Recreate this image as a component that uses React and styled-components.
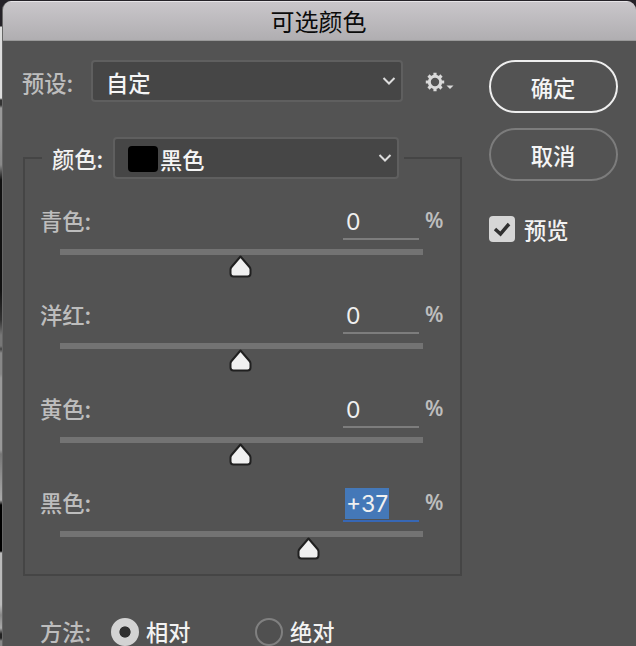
import React, { useState } from 'react';
import styled, { createGlobalStyle } from 'styled-components';

const CHANNELS = [
  { name: '青色', value: 0 },
  { name: '洋红', value: 0 },
  { name: '黄色', value: 0 },
  { name: '黑色', value: 37 },
];

const GlobalStyle = createGlobalStyle`
  * {
    box-sizing: border-box;
  }

  body {
    background: #2a262b;
    font-family: 'Noto Sans CJK SC', sans-serif;
    font-size: 22.3px;
    font-weight: 500;
    line-height: 32px;
    margin: 0;
    overflow: hidden;
  }
`;

const Page = styled.div`
  background: linear-gradient(
    #252228 0 26px, #dedede 27px 98px, #333 100px 105px, #999 108px 125px,
    #888 165px, #111 180px 290px, #333 320px, #777 335px 346px, #444 349px,
    #888 353px 374px, #999 378px 450px, #777 454px, #aaa 500px, #000 505px 551px,
    #bbb 553px 605px, #888 615px, #aaa 628px, #222 634px 638px, #888 641px
  );
  height: 646px;
  padding: 1px 0 0 2px;
  width: 636px;
`;

const Dialog = styled.div`
  background: #535353;
  border-left: 1px solid #666;
  border-radius: 9px 9px 0 0;
  height: 645px;
  overflow: hidden;
`;

const TitleBar = styled.header`
  background: linear-gradient(#c9c6ca, #b0aeb1);
  border-bottom: 1px solid #999;
  border-top: 1px solid #e6e4e7;
  color: #0b0b0b;
  font-size: 24px;
  font-weight: 400;
  height: 40px;
  line-height: 37px;
  padding-right: 2px;
  text-align: center;
`;

const Content = styled.main`
  display: flex;
  gap: 27px;
  padding: 19px 18px 0 20px;
`;

const Settings = styled.section`
  width: 439px;
`;

const PresetRow = styled.div`
  align-items: center;
  display: flex;
`;

const Label = styled.span`
  color: ${props => (props.$bright ? '#f2f2f2' : '#bdbdbd')};
  flex: none;
  width: ${props => props.$width}px;
`;

const PresetLabel = styled(Label)`
  margin-left: -1px;
  padding-top: 1px;
`;

const SelectBox = styled.button`
  align-items: center;
  background: #464646;
  border: 2px solid #5f5f5f;
  border-radius: 4px;
  color: #f5f5f5;
  display: flex;
  font: inherit;
  height: 42px;
  padding: 1px 5px 0 13px;
  width: ${props => props.$width}px;

  > svg {
    margin: 1px 0 0 auto;
  }
`;

const Swatch = styled.span`
  background: #000;
  border-radius: 4px;
  height: 26px;
  margin-right: 2px;
  width: 30px;
`;

const GearButton = styled.button`
  background: none;
  border: 0;
  height: 24px;
  margin: 2px 0 0 22px;
  padding: 0;
`;

const Group = styled.div`
  border: 2px solid #454545;
  height: 419px;
  margin-top: 55px;
`;

const GroupHeader = styled.div`
  align-items: center;
  background: #535353;
  display: flex;
  margin: -22px 0 0 17px;
  padding-left: 10px;
  width: 362px;
`;

const Channel = styled.div`
  height: 94px;
  padding: 25px 0 0 15px;
`;

const ChannelRow = styled.div`
  display: flex;
  height: 45px;
`;

const ValueBox = styled.div`
  border-bottom: 2px solid ${props => (props.$active ? '#3767b5' : '#7d7d7d')};
  color: #f0f0f0;
  font-family: Inter, sans-serif;
  font-size: 23px;
  font-weight: 400;
  height: 33px;
  line-height: 31px;
  margin-top: 3px;
  padding-left: 2px;
  width: 76px;

  span {
    background: ${props => (props.$active ? '#4478b8' : 'transparent')};
    display: block;
    height: 31px;
    margin-top: -1px;
    padding: 1px 1px 0;
    width: fit-content;
  }
`;

const Unit = styled.span`
  color: #bdbdbd;
  font-family: 'Noto Sans', sans-serif;
  font-size: 21px;
  font-weight: 600;
  margin-left: 6px;
`;

const Track = styled.div`
  background: #737373;
  height: 6px;
  margin-left: 20px;
  position: relative;
  width: 363px;
`;

const Thumb = styled.svg`
  display: block;
  margin-left: -12px;
  position: absolute;
  top: 6px;
`;

const MethodRow = styled.div`
  align-items: center;
  display: flex;
  height: 28px;
  line-height: 28px;
  margin: 42px 0 0 17px;
`;

const Option = styled.label`
  align-items: center;
  color: #f2f2f2;
  display: flex;
  gap: 7px;
  width: 144px;

  span {
    height: 28px;
    line-height: 26px;
  }
`;

const Radio = styled.input`
  appearance: none;
  background: ${props => (props.checked ? 'radial-gradient(circle, #303030 5.2px, #d3d3d3 6px)' : '#505050')};
  border: 2px solid ${props => (props.checked ? '#d3d3d3' : '#808080')};
  border-radius: 50%;
  height: 28px;
  margin: 0;
  width: 28px;
`;

const MethodLabel = styled(Label)`
  height: 28px;
  line-height: 26px;
`;

const Actions = styled.aside`
  display: flex;
  flex-direction: column;
  gap: 15px;
  width: 129px;
`;

const PillButton = styled.button`
  background: transparent;
  border: 2px solid ${props => (props.$primary ? '#eee' : '#7c7c7c')};
  border-radius: 27px;
  color: #f5f5f5;
  font: inherit;
  height: 53px;
  padding: 0 1px 0 0;
`;

const Preview = styled.label`
  align-items: center;
  color: #f2f2f2;
  display: flex;
  gap: 9px;
  margin-top: 17px;
`;

const CheckBox = styled.span`
  background: #d6d6d6;
  border-radius: 4px;
  height: 26px;
  margin-bottom: 1px;
  width: 26px;

  svg {
    display: block;
  }
`;

const Chevron = () => (
  <svg width="14" height="10" viewBox="0 0 14 10" fill="none" stroke="#ddd" strokeWidth="2">
    <path d="M1.5 1L7 6.5L12.5 1" />
  </svg>
);

const Gear = () => (
  <svg width="30" height="24" viewBox="0 0 30 24" fill="none" stroke="#dadada">
    <circle cx="10" cy="12" r="5.7" strokeWidth="3" />
    {[0, 45, 90, 135, 180, 225, 270, 315].map(angle => (
      <path key={angle} d="M10 6V2.8" strokeWidth="3.2" transform={`rotate(${angle} 10 12)`} />
    ))}
    <path d="M21.5 15.5h7l-3.5 3.5z" fill="#dadada" stroke="none" />
  </svg>
);

const Slider = ({ value }) => (
  <Track>
    <Thumb width="24" height="23" viewBox="0 0 24 23" style={{ left: `${49.8 + value * 0.51}%` }}>
      <path
        d="M11.5 1.5L20.5 12Q21.5 13.2 21.5 14.5V18.5Q21.5 21.5 18.5 21.5H4.5Q1.5 21.5 1.5 18.5V14.5Q1.5 13.2 2.5 12Z"
        fill="#f0f0f0"
        stroke="#202020"
        strokeWidth="2"
        strokeLinejoin="round"
      />
    </Thumb>
  </Track>
);

const App = () => {
  const [method, setMethod] = useState('相对');

  return (
    <Page>
      <GlobalStyle />
      <Dialog>
        <TitleBar>可选颜色</TitleBar>
        <Content>
          <Settings>
            <PresetRow>
              <PresetLabel $width={69}>预设:</PresetLabel>
              <SelectBox $width={312}>自定<Chevron /></SelectBox>
              <GearButton><Gear /></GearButton>
            </PresetRow>

            <Group>
              <GroupHeader>
                <Label $width={61} $bright>颜色:</Label>
                <SelectBox $width={286}>
                  <Swatch />黑色<Chevron />
                </SelectBox>
              </GroupHeader>

              {CHANNELS.map(({ name, value }) => (
                <Channel key={name}>
                  <ChannelRow>
                    <Label $width={303}>{name}:</Label>
                    <ValueBox $active={value !== 0}>
                      <span>{value > 0 ? `+${value}` : value}</span>
                    </ValueBox>
                    <Unit>%</Unit>
                  </ChannelRow>
                  <Slider value={value} />
                </Channel>
              ))}
            </Group>

            <MethodRow>
              <MethodLabel $width={71}>方法:</MethodLabel>
              {['相对', '绝对'].map(name => (
                <Option key={name}>
                  <Radio
                    type="radio"
                    checked={method === name}
                    onChange={() => setMethod(name)}
                  />
                  <span>{name}</span>
                </Option>
              ))}
            </MethodRow>
          </Settings>

          <Actions>
            <PillButton $primary>确定</PillButton>
            <PillButton>取消</PillButton>
            <Preview>
              <CheckBox>
                <svg width="26" height="26" fill="none" stroke="#303030" strokeWidth="3.5">
                  <path d="M6 13L11.5 18L20 8" />
                </svg>
              </CheckBox>
              预览
            </Preview>
          </Actions>
        </Content>
      </Dialog>
    </Page>
  );
};

export default App;
